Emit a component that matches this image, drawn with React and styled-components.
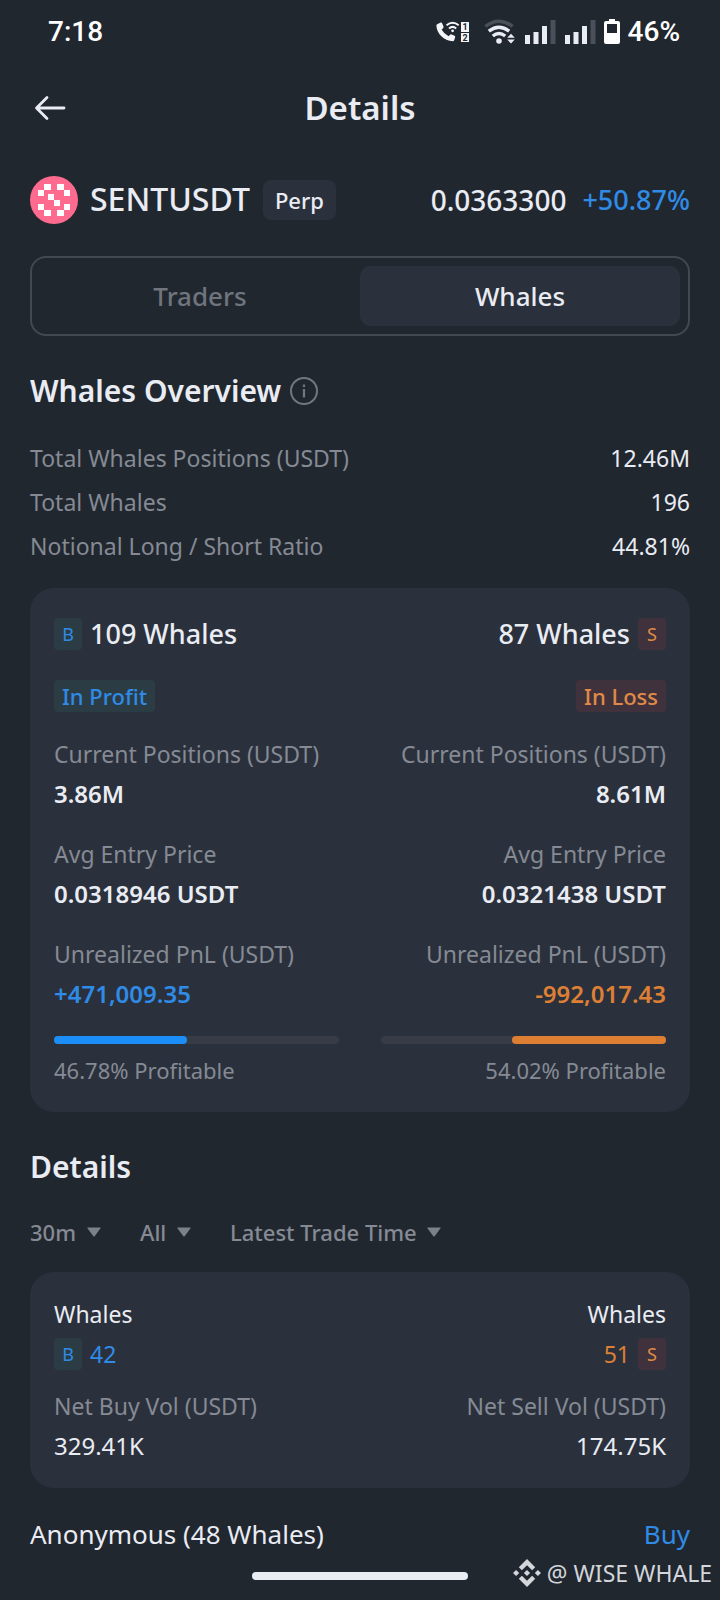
import React, { useState } from "react";
import styled, { createGlobalStyle } from "styled-components";

const overview = [
  { label: "Total Whales Positions (USDT)", value: "12.46M" },
  { label: "Total Whales", value: "196" },
  { label: "Notional Long / Short Ratio", value: "44.81%" },
];

const sides = [
  {
    side: "B",
    title: "109 Whales",
    status: "In Profit",
    positions: "3.86M",
    entry: "0.0318946 USDT",
    pnl: "+471,009.35",
    profitable: 46.78,
  },
  {
    side: "S",
    title: "87 Whales",
    status: "In Loss",
    positions: "8.61M",
    entry: "0.0321438 USDT",
    pnl: "-992,017.43",
    profitable: 54.02,
  },
];

const volumes = [
  { side: "B", count: "42", label: "Net Buy Vol (USDT)", value: "329.41K" },
  { side: "S", count: "51", label: "Net Sell Vol (USDT)", value: "174.75K" },
];

const filters = [
  { name: "Interval", value: "30m" },
  { name: "Side", value: "All" },
  { name: "Sort by", value: "Latest Trade Time" },
];

function CallIcon() {
  return (
    <svg width="34" height="24" viewBox="0 -1 34 24" aria-hidden="true">
      <path
        d="M1.2 3.2 4.6 1.6Q5.6 1.3 6.1 2.3L7.5 5.6Q7.8 6.5 7.1 7.2L5.6 8.6Q7.9 13 12.6 15.3L14 13.7Q14.7 13 15.6 13.4L18.6 14.8Q19.5 15.3 19.2 16.3L18.1 19.5Q17.8 20.3 16.8 20.3C8 20 .6 12.6.4 4.6Q.4 3.6 1.2 3.2Z"
        fill="#f4f6fa"
      />
      <g fill="none" stroke="#f4f6fa" strokeWidth="2">
        <path d="M10.5 4.2Q16.6-.8 22.7 4.2" />
        <path d="M13 7.4Q16.6 4.4 20.2 7.4" />
      </g>
      <circle cx="16.6" cy="9.8" r="1.4" fill="#f4f6fa" />
      <rect x="25" y="1" width="8" height="10" fill="#f4f6fa" />
      <rect x="25" y="12" width="8" height="9" fill="#f4f6fa" />
      <DigitText x="29" y="9">1</DigitText>
      <DigitText x="29" y="20">2</DigitText>
    </svg>
  );
}

function WifiIcon() {
  return (
    <svg width="32" height="26" viewBox="0 0 32 26" aria-hidden="true">
      <g fill="none" strokeWidth="3.4">
        <path d="M1.4 7.4Q15-3 28.6 7.400" stroke="#4a505a" />
        <path d="M4.800 12.200Q15 4.200 25.200 12.200" stroke="#e9ecf2" />
        <path d="M8.800 17Q15 12 21.200 17" stroke="#e9ecf2" />
      </g>
      <circle cx="15" cy="22" r="2.800" fill="#e9ecf2" />
      <path d="M27 13 33 19.600 27 26 21 19.600Z" fill="#21272f" />
      <path d="M27 14.800 30.800 18.800H23.200ZM27 24.600 30.800 20.600H23.200Z" fill="#e9ecf2" />
    </svg>
  );
}

function SignalIcon() {
  return (
    <svg width="32" height="26" viewBox="0 0 32 26" aria-hidden="true">
      <path d="M1 16h5v9H1zM9.500 13h5v12h-5zM18 7h5v18h-5z" fill="#e9ecf2" />
      <path d="M26.500 1h5v24h-5z" fill="#4a505a" />
    </svg>
  );
}

function BatteryIcon() {
  return (
    <svg width="16" height="26" viewBox="0 0 16 26" aria-hidden="true">
      <path
        d="M5 0h6v2h3a2 2 0 0 1 2 2v19a2 2 0 0 1-2 2H2a2 2 0 0 1-2-2V4a2 2 0 0 1 2-2h3zM3 5v9h10V5z"
        fill="#fff"
        fillRule="evenodd"
      />
    </svg>
  );
}

function BackIcon() {
  return (
    <svg width="32" height="26" viewBox="0 0 32 26" aria-hidden="true">
      <path
        d="M30 13H3M13 2.500 2.500 13 13 23.500"
        fill="none"
        stroke="#eaecf3"
        strokeWidth="2.800"
        strokeLinecap="round"
        strokeLinejoin="round"
      />
    </svg>
  );
}

function CoinLogo() {
  return (
    <svg width="48" height="48" viewBox="0 0 48 48" aria-hidden="true">
      <circle cx="24" cy="24" r="24" fill="#ff6b8f" />
      <path
        d="M14 8h7v6h-7zM27 8h7v6h-7zM8 14h6v6H8zM34 14h6v6h-6zM18 18h6v6h-6zM24 24h6v6h-6zM8 28h6v6H8zM34 28h6v6h-6zM14 34h7v6h-7zM27 34h7v6h-7z"
        fill="#fff"
      />
    </svg>
  );
}

function InfoIcon() {
  return (
    <svg width="28" height="28" viewBox="0 0 28 28" aria-hidden="true">
      <circle cx="14" cy="14" r="13" fill="none" stroke="#717681" strokeWidth="2" />
      <path d="M14 12v8.500M14 7.500v2.500" stroke="#717681" strokeWidth="2.200" />
    </svg>
  );
}

function ArrowDown() {
  return (
    <svg width="14" height="10" viewBox="0 0 14 10" aria-hidden="true">
      <path d="M1 .5h12q1 0 .4.9L7.800 9q-.8 1-1.600 0L.6 1.400Q0 .5 1 .5Z" fill="#7b808a" />
    </svg>
  );
}

function BrandMark() {
  return (
    <svg width="28" height="28" viewBox="0 0 28 28" aria-hidden="true">
      <path
        d="M14 0 22.200 8.200 19.100 11.300 14 6.200 8.900 11.300 5.800 8.200ZM3.100 10.900 6.200 14 3.100 17.100 0 14ZM24.900 10.900 28 14 24.900 17.100 21.800 14ZM14 10.900 17.100 14 14 17.100 10.900 14ZM14 28 5.800 19.800 8.900 16.700 14 21.800 19.100 16.700 22.200 19.800Z"
        fill="#d3d6db"
      />
    </svg>
  );
}

function SideColumn({ data }) {
  const right = data.side === "S";

  return (
    <Column $right={right}>
      <SideTitle $right={right}>
        <SideBadge $sell={right}>{data.side}</SideBadge>
        <h3>{data.title}</h3>
      </SideTitle>
      <StatusBadge $sell={right}>{data.status}</StatusBadge>
      <Stats>
        <Stat>
          <dt>Current Positions (USDT)</dt>
          <StatValue>{data.positions}</StatValue>
        </Stat>
        <Stat>
          <dt>Avg Entry Price</dt>
          <StatValue>{data.entry}</StatValue>
        </Stat>
        <Stat>
          <dt>Unrealized PnL (USDT)</dt>
          <StatValue $tone={right ? "sell" : "buy"}>{data.pnl}</StatValue>
        </Stat>
      </Stats>
      <Track $right={right}>
        <Fill $sell={right} style={{ width: `${data.profitable}%` }} />
      </Track>
      <TrackLabel>{data.profitable}% Profitable</TrackLabel>
    </Column>
  );
}

export default function App() {
  const [tab, setTab] = useState("Whales");

  return (
    <>
      <GlobalStyle />
      <StatusBar>
        <span>7:18</span>
        <StatusIcons>
          <CallIcon />
          <Signals>
            <WifiIcon />
            <SignalIcon />
            <SignalIcon />
            <BatteryIcon />
            <span>46%</span>
          </Signals>
        </StatusIcons>
      </StatusBar>

      <Header>
        <BackButton type="button" aria-label="Back">
          <BackIcon />
        </BackButton>
        <h1>Details</h1>
      </Header>

      <Content>
        <PairRow>
          <CoinLogo />
          <PairName>SENTUSDT</PairName>
          <Tag>Perp</Tag>
          <Price>0.0363300</Price>
          <Change>+50.87%</Change>
        </PairRow>

        <Tabs role="tablist">
          {["Traders", "Whales"].map((name) => (
            <Tab
              key={name}
              type="button"
              role="tab"
              aria-selected={tab === name}
              $active={tab === name}
              onClick={() => setTab(name)}
            >
              {name}
            </Tab>
          ))}
        </Tabs>

        <SectionTitle>
          <h2>Whales Overview</h2>
          <IconButton type="button" aria-label="About whales overview">
            <InfoIcon />
          </IconButton>
        </SectionTitle>
        <OverviewList>
          {overview.map((row) => (
            <OverviewRow key={row.label}>
              <dt>{row.label}</dt>
              <dd>{row.value}</dd>
            </OverviewRow>
          ))}
        </OverviewList>

        <Card>
          {sides.map((data) => (
            <SideColumn key={data.side} data={data} />
          ))}
        </Card>

        <SectionTitle>
          <h2>Details</h2>
        </SectionTitle>
        <Filters>
          {filters.map((filter) => (
            <Filter key={filter.name}>
              <select aria-label={filter.name}>
                <option>{filter.value}</option>
              </select>
              <ArrowDown />
            </Filter>
          ))}
        </Filters>

        <Card $compact>
          {volumes.map((data) => {
            const right = data.side === "S";
            return (
              <Column key={data.side} $right={right}>
                <p>Whales</p>
                <CountRow $right={right}>
                  <SideBadge $sell={right}>{data.side}</SideBadge>
                  <Count $sell={right}>{data.count}</Count>
                </CountRow>
                <Muted>{data.label}</Muted>
                <Volume>{data.value}</Volume>
              </Column>
            );
          })}
        </Card>

        <ListHeader>
          <span>Anonymous (48 Whales)</span>
          <a href="#buy">Buy</a>
        </ListHeader>
      </Content>

      <Footer>
        <HomeBar />
        <Watermark>
          <BrandMark />
          <span>@ WISE WHALE</span>
        </Watermark>
      </Footer>
    </>
  );
}

const GlobalStyle = createGlobalStyle`
  * {
    box-sizing: border-box;
  }
  body {
    margin: 0;
    background: #21272f;
    color: #eaecf3;
    font-family: "Noto Sans", "Open Sans", sans-serif;
    font-size: 23px;
    line-height: 40px;
  }
  h1, h2, h3, p, dl, dd {
    margin: 0;
  }
  button, select {
    border: 0;
    padding: 0;
    background: none;
    color: inherit;
    font: inherit;
  }
  svg {
    display: block;
    flex: none;
  }
`;

const DigitText = styled.text`
  fill: #21272f;
  font: 700 9px Roboto, sans-serif;
  text-anchor: middle;
`;

const StatusBar = styled.div`
  display: flex;
  justify-content: space-between;
  align-items: center;
  height: 64px;
  padding: 0 40px 0 48px;
  color: #fff;
  font-family: Roboto, sans-serif;
  font-size: 28px;
  font-weight: 500;
`;

const StatusIcons = styled.div`
  display: flex;
  align-items: center;
  gap: 14px;
`;

const Signals = styled.div`
  display: flex;
  align-items: center;
  gap: 8px;
`;

const Header = styled.header`
  display: grid;
  grid-template-columns: 1fr auto 1fr;
  align-items: center;
  height: 88px;
  padding: 0 34px;

  h1 {
    font-size: 33px;
    font-weight: 600;
  }
`;

const BackButton = styled.button`
  justify-self: start;
`;

const Content = styled.main`
  padding: 24px 30px 0;
`;

const PairRow = styled.div`
  display: flex;
  align-items: center;
  height: 48px;
`;

const PairName = styled.span`
  margin-left: 12px;
  padding-bottom: 3px;
  font-size: 32px;
  font-weight: 500;
`;

const Tag = styled.span`
  margin-left: 13px;
  padding: 0 12px;
  border-radius: 8px;
  background: #2b313c;
  font-size: 22px;
  font-weight: 500;
`;

const Price = styled.span`
  margin-left: auto;
  font-size: 28px;
  font-weight: 500;
`;

const Change = styled.span`
  margin-left: 16px;
  color: #2f8be6;
  font-size: 27px;
  font-weight: 500;
`;

const Tabs = styled.div`
  display: grid;
  grid-template-columns: 1fr 1fr;
  margin-top: 32px;
  padding: 8px;
  border: 2px solid #434852;
  border-radius: 16px;
`;

const Tab = styled.button`
  height: 60px;
  border-radius: 10px;
  background: ${(props) => (props.$active ? "#2b313c" : "transparent")};
  color: ${(props) => (props.$active ? "#eaecf3" : "#6f747d")};
  font-size: 26px;
  font-weight: 500;
`;

const SectionTitle = styled.div`
  display: flex;
  align-items: center;
  gap: 9px;
  margin: 35px 0 25px;

  h2 {
    font-size: 30px;
    font-weight: 600;
  }
`;

const IconButton = styled.button`
  display: flex;
`;

const OverviewList = styled.dl`
  line-height: 44px;
`;

const OverviewRow = styled.div`
  display: flex;
  justify-content: space-between;

  dt {
    color: #858a94;
  }
`;

const Card = styled.section`
  display: grid;
  grid-template-columns: 1fr 1fr;
  gap: 42px;
  margin-top: 20px;
  padding: ${(props) => (props.$compact ? "22px 24px" : "30px 24px 22px")};
  border-radius: 24px;
  background: #2b313c;
`;

const Column = styled.div`
  display: flex;
  flex-direction: column;
  align-items: ${(props) => (props.$right ? "flex-end" : "flex-start")};
  text-align: ${(props) => (props.$right ? "right" : "left")};
  white-space: nowrap;
`;

const SideTitle = styled.div`
  display: flex;
  flex-direction: ${(props) => (props.$right ? "row-reverse" : "row")};
  align-items: center;
  gap: 8px;
  height: 32px;

  h3 {
    font-size: 27px;
    font-weight: 500;
  }
`;

const SideBadge = styled.span`
  width: 28px;
  border-radius: 4px;
  background: ${(props) => (props.$sell ? "#40323c" : "#2b3c45")};
  color: ${(props) => (props.$sell ? "#e08a48" : "#2f8be6")};
  font-size: 18px;
  line-height: 32px;
  text-align: center;
`;

const StatusBadge = styled.span`
  margin: 30px 0 22px;
  padding: 0 8px;
  border-radius: 4px;
  background: ${(props) => (props.$sell ? "#40323c" : "#2b3c45")};
  color: ${(props) => (props.$sell ? "#e08a48" : "#2f8be6")};
  font-size: 22px;
  font-weight: 500;
  line-height: 32px;
`;

const Stats = styled.dl`
  display: flex;
  flex-direction: column;
  gap: 20px;
`;

const Stat = styled.div`
  dt {
    color: #858a94;
  }
`;

const tones = { buy: "#2f8be6", sell: "#dd7f35" };

const StatValue = styled.dd`
  color: ${(props) => tones[props.$tone] || "#eaecf3"};
  font-size: 24px;
  font-weight: 600;
`;

const Track = styled.div`
  display: flex;
  justify-content: ${(props) => (props.$right ? "flex-end" : "flex-start")};
  align-self: stretch;
  height: 8px;
  margin: 22px 0 6px;
  border-radius: 4px;
  background: #363b46;
`;

const Fill = styled.div`
  border-radius: 4px;
  background: ${(props) => (props.$sell ? "#dc7f33" : "#1c8ef8")};
`;

const Muted = styled.p`
  color: #858a94;
`;

const TrackLabel = styled(Muted)`
  font-size: 22px;
`;

const Volume = styled.p`
  font-size: 24px;
`;

const Filters = styled.div`
  display: flex;
  gap: 39px;
`;

const Filter = styled.div`
  display: flex;
  align-items: center;
  gap: 10px;
  color: #858a94;

  select {
    appearance: none;
    font-size: 22px;
    font-weight: 500;
  }
`;

const CountRow = styled.div`
  display: flex;
  flex-direction: ${(props) => (props.$right ? "row-reverse" : "row")};
  align-items: center;
  gap: 8px;
  margin-bottom: 12px;
`;

const Count = styled.span`
  color: ${(props) => (props.$sell ? "#dd7f35" : "#2f8be6")};
`;

const ListHeader = styled.div`
  display: flex;
  justify-content: space-between;
  margin-top: 26px;
  font-size: 26px;

  a {
    color: #2f8be6;
    text-decoration: none;
  }
`;

const Footer = styled.footer`
  position: relative;
  display: flex;
  justify-content: center;
  align-items: center;
  height: 44px;
`;

const HomeBar = styled.div`
  width: 30%;
  height: 8px;
  border-radius: 4px;
  background: #e9ecf3;
`;

/* sits over the home bar area */
const Watermark = styled.div`
  position: absolute;
  right: 8px;
  bottom: 5px;
  display: flex;
  align-items: center;
  gap: 6px;
  color: #d3d6db;
`;
